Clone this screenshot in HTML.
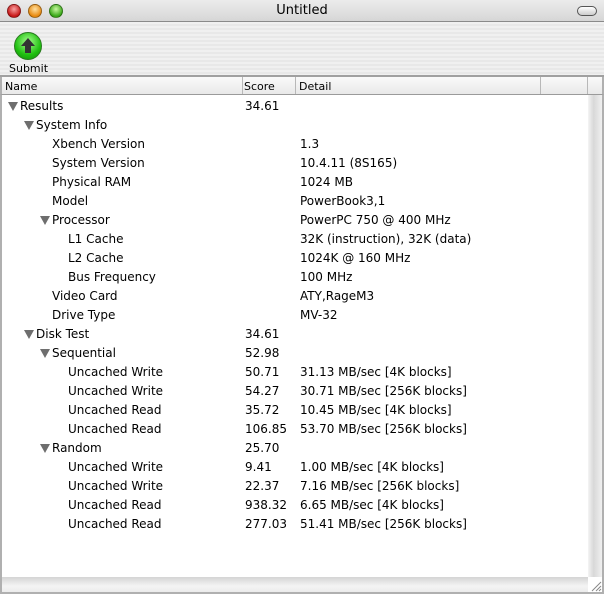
<!DOCTYPE html>
<html><head><style>
*{margin:0;padding:0;box-sizing:border-box}
body{width:604px;height:594px;overflow:hidden;background:#fff;font-family:"DejaVu Sans","Liberation Sans",sans-serif;font-size:12px;color:#000;position:relative}
.tb{position:absolute;left:0;top:0;width:604px;height:22px;background:linear-gradient(#ececec,#d6d6d6);border-bottom:1px solid #8a8a8a;text-align:center;font-size:13px;line-height:21px}
.btn{position:absolute;top:4px;width:14px;height:14px;border-radius:50%;border:1px solid rgba(0,0,0,.35)}
.tool{position:absolute;left:0;top:22px;width:604px;height:55px;background:repeating-linear-gradient(#f0f0f0 0 2px,#e8e8e8 2px 4px);border-bottom:2px solid #a0a0a0}
.hdr{position:absolute;left:0;top:77px;width:604px;height:18px;background:linear-gradient(#fafafa,#e9e9e9);border-bottom:1px solid #9a9a9a;font-size:11px;line-height:19px;border-left:2px solid #b0b0b0;border-right:2px solid #b0b0b0}
.hdr span{position:absolute;top:0;height:17px;border-right:1px solid #b8b8b8;padding-left:3px}
.w{position:absolute;left:0;top:1px;width:604px;height:560px}
.r{position:absolute;height:19px;line-height:19px;white-space:nowrap}
.tri{position:absolute;width:0;height:0;border-left:5px solid transparent;border-right:5px solid transparent;border-top:9px solid #6e6e6e}
</style></head><body>
<div class="tb">Untitled
<div class="btn" style="left:7px;background:radial-gradient(circle at 50% 35%,#f8a0a0,#c81818 70%)"></div>
<div class="btn" style="left:28px;background:radial-gradient(circle at 50% 35%,#ffe0a0,#e88a10 70%)"></div>
<div class="btn" style="left:49px;background:radial-gradient(circle at 50% 35%,#c8f8a0,#3aa818 70%)"></div>
<div style="position:absolute;left:577px;top:6px;width:20px;height:10px;border:1px solid #555;border-radius:5px;background:linear-gradient(#fff,#ccc)"></div>
</div>
<div class="tool">
<div style="position:absolute;left:14px;top:10px;width:28px;height:28px;border-radius:50%;background:radial-gradient(circle at 50% 35%,#a8ff90,#20c010 60%,#108a08);border:1px solid #2a7a20"></div>
<svg style="position:absolute;left:14px;top:10px" width="28" height="28"><path d="M14 6 L21 14 L17 14 L17 21 L11 21 L11 14 L7 14 Z" fill="#333"/></svg>
<div style="position:absolute;left:9px;top:40px;font-size:11px">Submit</div>
</div>
<div class="hdr"><span style="left:0;width:241px">Name</span><span style="left:239px;width:55px">Score</span><span style="left:294px;width:245px">Detail</span><span style="left:539px;width:47px"></span></div>
<div style="position:absolute;left:0;top:95px;width:2px;height:499px;background:#b0b0b0"></div>
<div style="position:absolute;left:588px;top:95px;width:14px;height:482px;background:linear-gradient(90deg,#f4f4f4,#d8d8d8 40%,#f0f0f0)"></div>
<div style="position:absolute;left:602px;top:95px;width:2px;height:499px;background:#b0b0b0"></div>
<div style="position:absolute;left:2px;top:577px;width:586px;height:15px;background:linear-gradient(#d4d4d4,#f4f4f4 60%,#ececec)"></div>
<div style="position:absolute;left:0;top:592px;width:604px;height:2px;background:#b0b0b0"></div>
<svg style="position:absolute;left:590px;top:580px" width="12" height="12"><path d="M11 2 L2 11 M11 6 L6 11 M11 9 L9 11" stroke="#888" stroke-width="1"/></svg>

<div class="w">
<div class="tri" style="left:8px;top:101px"></div><div class="r" style="left:20px;top:96px">Results</div><div class="r" style="left:245px;top:96px">34.61</div>
<div class="tri" style="left:24px;top:120px"></div><div class="r" style="left:36px;top:115px">System Info</div>
<div class="r" style="left:52px;top:134px">Xbench Version</div><div class="r" style="left:300px;top:134px">1.3</div>
<div class="r" style="left:52px;top:153px">System Version</div><div class="r" style="left:300px;top:153px">10.4.11 (8S165)</div>
<div class="r" style="left:52px;top:172px">Physical RAM</div><div class="r" style="left:300px;top:172px">1024 MB</div>
<div class="r" style="left:52px;top:191px">Model</div><div class="r" style="left:300px;top:191px">PowerBook3,1</div>
<div class="tri" style="left:40px;top:215px"></div><div class="r" style="left:52px;top:210px">Processor</div><div class="r" style="left:300px;top:210px">PowerPC 750 @ 400 MHz</div>
<div class="r" style="left:68px;top:229px">L1 Cache</div><div class="r" style="left:300px;top:229px">32K (instruction), 32K (data)</div>
<div class="r" style="left:68px;top:248px">L2 Cache</div><div class="r" style="left:300px;top:248px">1024K @ 160 MHz</div>
<div class="r" style="left:68px;top:267px">Bus Frequency</div><div class="r" style="left:300px;top:267px">100 MHz</div>
<div class="r" style="left:52px;top:286px">Video Card</div><div class="r" style="left:300px;top:286px">ATY,RageM3</div>
<div class="r" style="left:52px;top:305px">Drive Type</div><div class="r" style="left:300px;top:305px">MV-32</div>
<div class="tri" style="left:24px;top:329px"></div><div class="r" style="left:36px;top:324px">Disk Test</div><div class="r" style="left:245px;top:324px">34.61</div>
<div class="tri" style="left:40px;top:348px"></div><div class="r" style="left:52px;top:343px">Sequential</div><div class="r" style="left:245px;top:343px">52.98</div>
<div class="r" style="left:68px;top:362px">Uncached Write</div><div class="r" style="left:245px;top:362px">50.71</div><div class="r" style="left:300px;top:362px">31.13 MB/sec [4K blocks]</div>
<div class="r" style="left:68px;top:381px">Uncached Write</div><div class="r" style="left:245px;top:381px">54.27</div><div class="r" style="left:300px;top:381px">30.71 MB/sec [256K blocks]</div>
<div class="r" style="left:68px;top:400px">Uncached Read</div><div class="r" style="left:245px;top:400px">35.72</div><div class="r" style="left:300px;top:400px">10.45 MB/sec [4K blocks]</div>
<div class="r" style="left:68px;top:419px">Uncached Read</div><div class="r" style="left:245px;top:419px">106.85</div><div class="r" style="left:300px;top:419px">53.70 MB/sec [256K blocks]</div>
<div class="tri" style="left:40px;top:443px"></div><div class="r" style="left:52px;top:438px">Random</div><div class="r" style="left:245px;top:438px">25.70</div>
<div class="r" style="left:68px;top:457px">Uncached Write</div><div class="r" style="left:245px;top:457px">9.41</div><div class="r" style="left:300px;top:457px">1.00 MB/sec [4K blocks]</div>
<div class="r" style="left:68px;top:476px">Uncached Write</div><div class="r" style="left:245px;top:476px">22.37</div><div class="r" style="left:300px;top:476px">7.16 MB/sec [256K blocks]</div>
<div class="r" style="left:68px;top:495px">Uncached Read</div><div class="r" style="left:245px;top:495px">938.32</div><div class="r" style="left:300px;top:495px">6.65 MB/sec [4K blocks]</div>
<div class="r" style="left:68px;top:514px">Uncached Read</div><div class="r" style="left:245px;top:514px">277.03</div><div class="r" style="left:300px;top:514px">51.41 MB/sec [256K blocks]</div>
</div>
</body></html>
